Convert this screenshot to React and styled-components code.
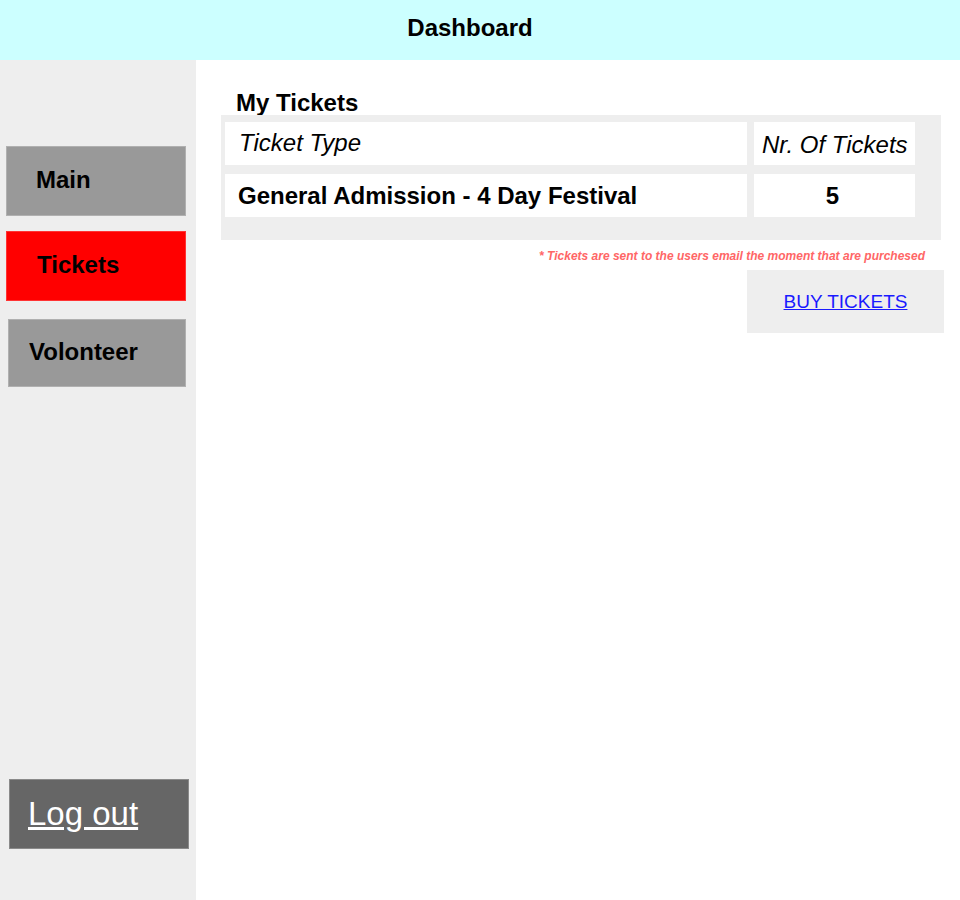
import React from 'react'
import styled, { createGlobalStyle } from 'styled-components'

const GlobalStyle = createGlobalStyle`
  html, body {
    margin: 0;
    padding: 0;
    font-family: "Liberation Sans", Arial, sans-serif;
    background: #ffffff;
  }
`

const Page = styled.div`
  width: 960px;
  height: 900px;
  display: flex;
  flex-direction: column;
  overflow: hidden;
`

const Header = styled.header`
  height: 60px;
  flex-shrink: 0;
  background: #ccffff;
  display: flex;
  align-items: center;
  justify-content: center;
  padding-right: 20px;
  padding-bottom: 5px;
  box-sizing: border-box;
  font-size: 24px;
  font-weight: 700;
  color: #000;
`

const Body = styled.div`
  flex: 1;
  display: flex;
`

const Sidebar = styled.nav`
  width: 196px;
  flex-shrink: 0;
  background: #eeeeee;
  display: flex;
  flex-direction: column;
  padding-top: 86px;
  box-sizing: border-box;
`

const NavButton = styled.div`
  box-sizing: border-box;
  width: ${p => p.$w || 180}px;
  height: ${p => p.$h || 70}px;
  margin-left: ${p => p.$left || 6}px;
  margin-top: ${p => p.$top || 0}px;
  padding-left: ${p => p.$pad || 30}px;
  padding-bottom: 2px;
  background: ${p => (p.$active ? '#ff0000' : '#999999')};
  border: 1px solid ${p => (p.$active ? '#ff3333' : '#b0b0b0')};
  display: flex;
  align-items: center;
  font-size: 24px;
  font-weight: 700;
  color: #000;
`

const LogoutButton = styled.div`
  box-sizing: border-box;
  width: 180px;
  height: 70px;
  margin-left: 9px;
  margin-top: auto;
  margin-bottom: 51px;
  padding-left: 18px;
  background: #666666;
  border: 1px solid #8a8a8a;
  display: flex;
  align-items: center;

  a {
    color: #ffffff;
    font-size: 33px;
    text-decoration: underline;
  }
`

const Main = styled.main`
  flex: 1;
  padding: 31px 0 0 25px;
  display: flex;
  flex-direction: column;
`

const Title = styled.h2`
  margin: 0 0 0 15px;
  font-size: 24px;
  font-weight: 700;
  line-height: 24px;
  color: #000;
`

const Table = styled.div`
  width: 720px;
  box-sizing: border-box;
  background: #eeeeee;
  padding: 7px 0 23px 4px;
  display: flex;
  flex-direction: column;
  gap: 9px;
`

const Row = styled.div`
  display: flex;
  gap: 7px;
`

const Cell = styled.div`
  box-sizing: border-box;
  width: ${p => p.$w}px;
  height: 43px;
  background: #ffffff;
  display: flex;
  align-items: center;
  justify-content: ${p => (p.$center ? 'center' : 'flex-start')};
  padding-left: ${p => (p.$center ? 0 : p.$pad ?? 13)}px;
  padding-right: ${p => (p.$center ? 4 : 0)}px;
  padding-top: ${p => p.$pt || 0}px;
  padding-bottom: ${p => p.$pb || 0}px;
  font-size: 24px;
  font-style: ${p => (p.$italic ? 'italic' : 'normal')};
  font-weight: ${p => (p.$bold ? 700 : 400)};
  color: #000;
  white-space: nowrap;
`

const Note = styled.p`
  margin: 9px 0 0 0;
  width: 704px;
  text-align: right;
  font-size: 12px;
  font-weight: 700;
  font-style: italic;
  color: #ff6666;
`

const BuyButton = styled.div`
  box-sizing: border-box;
  width: 197px;
  height: 63px;
  margin: 7px 0 0 526px;
  background: #eeeeee;
  display: flex;
  align-items: center;
  justify-content: center;

  a {
    color: #1a1aff;
    font-size: 19px;
    text-decoration: underline;
  }
`

const App = () => {
  return (
    <Page>
      <GlobalStyle />
      <Header>Dashboard</Header>
      <Body>
        <Sidebar>
          <NavButton $pad={29}>Main</NavButton>
          <NavButton $active $top={15} $pad={30}>Tickets</NavButton>
          <NavButton $top={18} $left={8} $w={178} $h={68} $pad={20}>Volonteer</NavButton>
          <LogoutButton>
            <a href="#">Log out</a>
          </LogoutButton>
        </Sidebar>
        <Main>
          <Title>My Tickets</Title>
          <Table>
            <Row>
              <Cell $w={522} $italic $pad={14} $pb={2}>Ticket Type</Cell>
              <Cell $w={161} $italic $pad={8} $pt={2}>Nr. Of Tickets</Cell>
            </Row>
            <Row>
              <Cell $w={522} $bold>General Admission - 4 Day Festival</Cell>
              <Cell $w={161} $bold $center>5</Cell>
            </Row>
          </Table>
          <Note>* Tickets are sent to the users email the moment that are purchesed</Note>
          <BuyButton>
            <a href="#">BUY TICKETS</a>
          </BuyButton>
        </Main>
      </Body>
    </Page>
  )
}

export default App
